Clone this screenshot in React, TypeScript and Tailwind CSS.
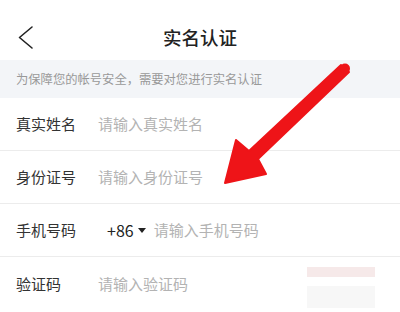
const font = { fontFamily: '"Noto Sans CJK SC", "Noto Sans", sans-serif' }

const Row = ({ label, children }: { label: string; children: React.ReactNode }) => (
	<div className="flex items-center h-[53px] border-b border-[#ececec] pl-4 pr-6">
		<span className="w-[82px] text-[15px] text-[#333]">{label}</span>
		{children}
	</div>
)

export default function App() {
	return (
		<div className="relative w-[400px] h-[312px] overflow-hidden bg-white" style={font}>
			<header className="flex items-center justify-center h-[60px] relative">
				<svg className="absolute left-0 top-0" width="40" height="60" viewBox="0 0 40 60">
					<polyline points="32,27 19.5,37.5 32,48" fill="none" stroke="#222" strokeWidth="1.6" strokeLinecap="round" strokeLinejoin="round" />
				</svg>
				<h1 className="text-[18.5px] font-medium text-[#222] mt-[16px]">实名认证</h1>
			</header>
			<div className="h-[38px] bg-[#f3f5f8] flex items-center pl-4 text-[12.3px] text-[#999]">
				为保障您的帐号安全，需要对您进行实名认证
			</div>
			<Row label="真实姓名">
				<span className="text-[15px] text-[#b3b3b3]">请输入真实姓名</span>
			</Row>
			<Row label="身份证号">
				<span className="text-[15px] text-[#b3b3b3]">请输入身份证号</span>
			</Row>
			<Row label="手机号码">
				<span className="ml-[9px] text-[16px] text-[#222]">+86</span>
				<span className="ml-[4px] mt-[1px] w-0 h-0 border-l-[4px] border-r-[4px] border-t-[5px] border-l-transparent border-r-transparent border-t-[#222]" />
				<span className="ml-[8px] text-[15px] text-[#b3b3b3]">请输入手机号码</span>
			</Row>
			<div className="flex items-center h-[54px] pl-4">
				<span className="w-[82px] text-[15px] text-[#333]">验证码</span>
				<span className="text-[15px] text-[#b3b3b3]">请输入验证码</span>
				<div className="ml-auto mr-[25px] flex flex-col gap-[9px] w-[68px] self-start mt-[10px]">
					<div className="h-[10px] bg-[#f6e9e9]" />
					<div className="h-[22px] bg-[#f7f7f7]" />
				</div>
			</div>
			<svg className="absolute inset-0 pointer-events-none" width="400" height="312" viewBox="0 0 400 312">
				<polygon
					points="341,65 349,72 258,159 266,174 225,183 236,140 249,151"
					fill="#ee1418"
					stroke="#ee1418"
					strokeWidth="2"
					strokeLinejoin="round"
				/>
				<circle cx="345" cy="68.5" r="5" fill="#ee1418" />
			</svg>
		</div>
	)
}
